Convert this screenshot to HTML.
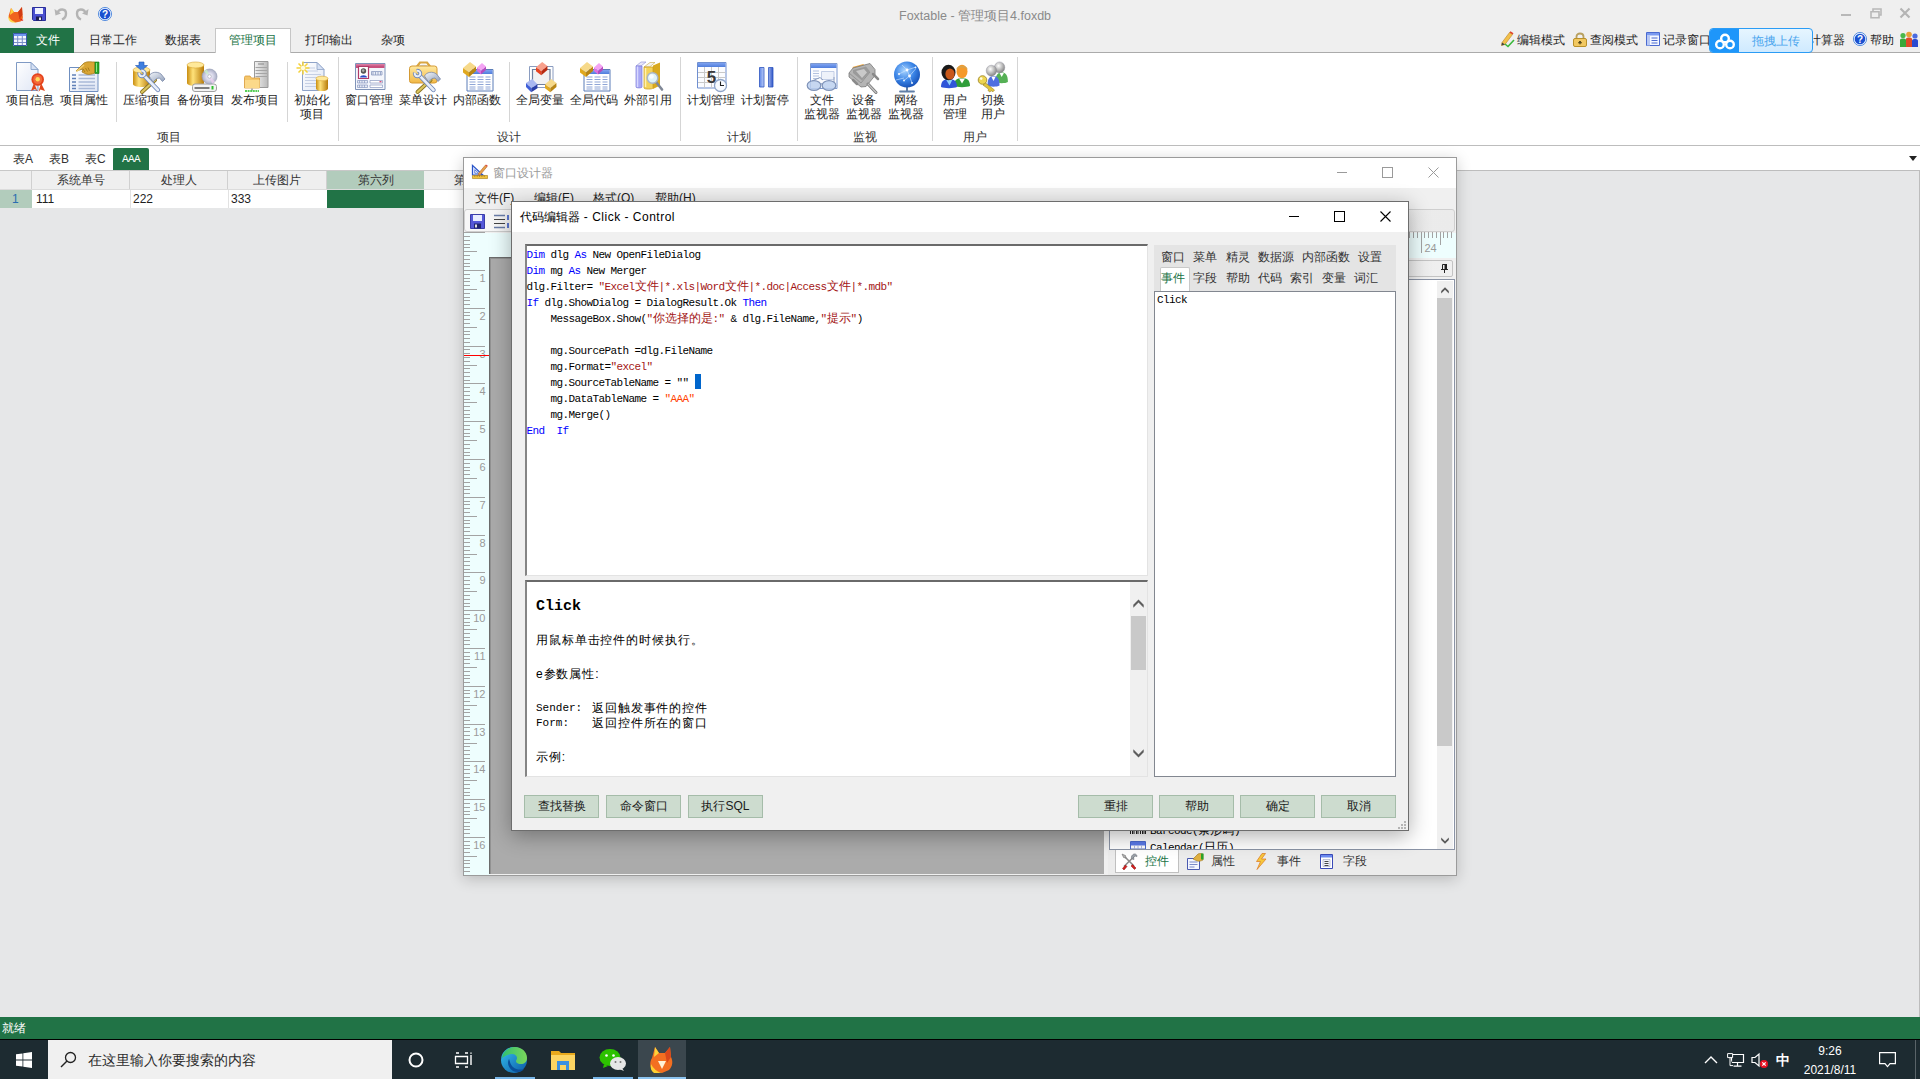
<!DOCTYPE html>
<html lang="zh">
<head>
<meta charset="utf-8">
<title>Foxtable</title>
<style>
*{box-sizing:border-box;margin:0;padding:0}
html,body{width:1920px;height:1079px;overflow:hidden;background:#e6e7e8;font-family:"Liberation Sans",sans-serif;font-size:12px;color:#1e1e1e}
.abs,.abs *{position:absolute}
.abs .code span{position:static}
.t{position:absolute;white-space:nowrap;line-height:1}
.c{text-align:center}
svg{position:absolute;overflow:visible}
/* ---------- main app ---------- */
#titlebar{left:0;top:0;width:1920px;height:53px;background:#efefef}
#tabline{left:0;top:52px;width:1920px;height:1px;background:#ababab}
#filebtn{left:0;top:28px;width:74px;height:25px;background:#217346}
#acttab{left:215px;top:28px;width:76px;height:25px;background:#fff;border:1px solid #c6c6c6;border-bottom:none}
#ribbon{left:0;top:53px;width:1920px;height:92px;background:#fff}
#ribline{left:0;top:145px;width:1920px;height:1px;background:#bdbdbd}
#tabrow{left:0;top:146px;width:1920px;height:24px;background:#fff}
.rt{font-size:12px;color:#262626;top:34px}
.rl{font-size:12px;color:#1e1e1e;text-align:center;line-height:14px}
.gl{font-size:12px;color:#333}
.sep{width:1px;background:#d5d5d5}

#cloud{left:1709px;top:28px;width:104px;height:25px;border:1px solid #2b9cf5;border-radius:4px;background:linear-gradient(#e6f5ff,#cfeaff);overflow:hidden}
#cloudl{left:0;top:0;width:29px;height:25px;background:#1e96fa}
/* grid */
#grid{left:0;top:170px;width:464px;height:38px;background:#fff}
.gh{top:1px;height:18px;background:#efefef;border-right:1px solid #d0d0d0;font-size:12px;text-align:center;line-height:18px;color:#333}

/* ---------- designer window ---------- */
#dsg{left:463px;top:157px;width:994px;height:719px;background:#f0f0f0;border:1px solid #9b9b9b;box-shadow:0 3px 14px rgba(0,0,0,.20)}
#dsg .title{left:-1px;top:0;width:992px;height:30px;background:#fff}
#dsg .menu{left:-1px;top:30px;width:992px;height:21px;background:#f0f0f0}
#dsg .tool{left:-1px;top:51px;width:992px;height:24px;background:#f1f1f1}
#dsg .hr{left:-1px;top:75px;width:992px;height:25px;background:#eefefe}
#dsg .vr{left:-1px;top:100px;width:26px;height:617px;background:#eefefe}
#dsg .cv{left:24px;top:99px;width:615px;height:617px;background:#ababab;border-left:1px solid #6c6c6c;border-top:1px solid #6c6c6c;box-shadow:inset 1px 1px 0 #929292}
#dsg .tb{left:643px;top:100px;width:348px;height:617px;background:#f0f0f0}
.mi{font-size:12px;color:#1a1a1a;top:34px}
/* ---------- code editor dialog ---------- */
#dlg{left:511px;top:201px;width:898px;height:630px;background:#f0f0f0;border:1px solid #6d6d6d;box-shadow:0 5px 20px rgba(0,0,0,.32)}
#dlg .title{left:0;top:-1px;width:896px;height:30px;background:#fff}
.sunk{background:#fff;border-top:2px solid #6a6a6a;border-left:2px solid #858585;border-right:1px solid #e3e3e3;border-bottom:1px solid #e3e3e3}
.btn{height:23px;width:75px;top:592px;background:#cddccf;border:1px solid #a5bca9;font-size:12px;text-align:center;line-height:21px;color:#1a1a1a}
.code{font-family:"Liberation Mono",monospace;font-size:11px;letter-spacing:-0.6px;line-height:16px;white-space:pre;color:#000}
.cj{font-size:12px;letter-spacing:0}
.kw{color:#0000ff}.str{color:#a31515}.str2{color:#ff4500}
.tab2{font-size:12px;color:#333}
/* status/taskbar */
#status{left:0;top:1017px;width:1920px;height:22px;background:#217346}
#taskbar{left:0;top:1039px;width:1920px;height:40px;border-top:1px solid #000;background:#1d2b31}
</style>
</head>
<body>
<div class="abs" id="app">
  <div id="titlebar"></div>
  <div id="tabline"></div>
  <div id="filebtn"></div>
  <div id="acttab"></div>
  <div class="t" style="left:899px;top:10px;font-size:12.5px;color:#8a8a8a">Foxtable - 管理项目4.foxdb</div>
  <div style="left:1841px;top:14px;width:10px;height:2px;background:#b8b8b8"></div>
  <svg style="left:1870px;top:8px" width="12" height="11" viewBox="0 0 12 11"><path d="M3 3V1h8v6H9" fill="none" stroke="#b8b8b8" stroke-width="1.6"/><path d="M1 3.8h8v6H1z" fill="none" stroke="#b8b8b8" stroke-width="1.6"/></svg>
  <svg style="left:1900px;top:8px" width="10" height="10" viewBox="0 0 10 10"><path d="M0.5 0.5l9 9M9.5 0.5l-9 9" stroke="#b4b4b4" stroke-width="2.2"/></svg>
  <!-- quick access -->
  <svg style="left:8px;top:6px" width="16" height="17" viewBox="0 0 16 17"><path d="M3 2l3 4h4l4-5 .5 8c1 3 0 5-2 6.500l-5 1-5-1.500c-2-2-2.500-5-1-8z" fill="#f0641e"/><path d="M3 2l3 4-4 3z" fill="#ffcf3a"/><path d="M0.500 10c1 3 4 5.500 8 6.500H4c-3-1-4-3.500-3.500-6.500z" fill="#ffd84a"/><path d="M10 6l4-5 .5 8-3 4z" fill="#d23c14"/><path d="M11 12l3 3 1.500-1z" fill="#e01e10"/></svg>
  <svg style="left:32px;top:7px" width="14" height="14" viewBox="0 0 14 14"><path d="M0.500 0.500h13v13h-12l-1-1z" fill="#4a4fd0" stroke="#2a2f9a"/><path d="M3 1h8v6H3z" fill="#eef1ff"/><path d="M4 9.500h6v4H4z" fill="#1e1e50"/><path d="M7 10.500h2v2.500H7z" fill="#e8e8e8"/></svg>
  <svg style="left:54px;top:7px" width="14" height="13" viewBox="0 0 14 13"><path d="M3 6.500C5 1 12 1.500 12 6.500c0 3-1.500 5-4 6" fill="none" stroke="#b4b4b4" stroke-width="2.400"/><path d="M0.500 2l1 6.500 5.500-2z" fill="#b4b4b4"/></svg>
  <svg style="left:75px;top:7px" width="14" height="13" viewBox="0 0 14 13"><path d="M11 6.500C9 1 2 1.500 2 6.500c0 3 1.500 5 4 6" fill="none" stroke="#b4b4b4" stroke-width="2.400"/><path d="M13.500 2l-1 6.500-5.500-2z" fill="#b4b4b4"/></svg>
  <svg style="left:98px;top:7px" width="14" height="14" viewBox="0 0 14 14"><circle cx="7" cy="7" r="6.600" fill="#e8f2ff" stroke="#3a7ad8" stroke-width=".8"/><circle cx="7" cy="7" r="5.300" fill="#1a50d0"/><text x="7" y="10.600" font-family="Liberation Sans,sans-serif" font-weight="bold" font-size="10" fill="#fff" text-anchor="middle">?</text></svg>
  <!-- file btn icon -->
  <svg style="left:13px;top:33px" width="14" height="13" viewBox="0 0 14 13"><path d="M0 0h14v13H0z" fill="#f4f7ff"/><path d="M0 0h14v3H0z" fill="#6f96ee"/><path d="M0 6h14M0 9.500h14M4.700 3v10M9.300 3v10" stroke="#7a8ec8" stroke-width="1"/><path d="M0.500 0.500h13v12h-13z" fill="none" stroke="#3a5aa8"/></svg>
  <!-- right icons -->
  <svg style="left:1500px;top:31px" width="15" height="16" viewBox="0 0 15 16"><path d="M2 11.500L9.500 1.500l3 2L5 13.500l-3.500 1z" fill="#f2c04a" stroke="#b8862a" stroke-width=".6"/><path d="M9.500 1.500l1-1.200 3 2-1 1.200z" fill="#e0402a"/><path d="M1.500 14.500L2 11.500l3 2z" fill="#444"/><path d="M5 13l3 2.500L14 9" fill="none" stroke="#3ab83a" stroke-width="1.600"/></svg>
  <svg style="left:1573px;top:32px" width="14" height="15" viewBox="0 0 14 15"><path d="M3.500 7V4.500c0-4 7-4 7 0V7" fill="none" stroke="#b8a060" stroke-width="1.800"/><rect x="0.500" y="6.500" width="13" height="8" rx="1.500" fill="#f2c860" stroke="#b8902a"/><path d="M7 9v3.500M5.500 11l1.500-2 1.500 2z" stroke="#5a4a1a" stroke-width="1" fill="#5a4a1a"/></svg>
  <svg style="left:1646px;top:32px" width="14" height="14" viewBox="0 0 14 14"><path d="M0.500 0.500h13v13h-13z" fill="#f4f7ff" stroke="#4a6ad0"/><path d="M1 1h12v2.500H1z" fill="#7a9af0"/><path d="M1 3.500h3v10H1z" fill="#b8c8f4"/><path d="M5.500 6h6M5.500 8.500h6M5.500 11h6" stroke="#4a6ad0" stroke-width="1"/></svg>
  <svg style="left:1853px;top:32px" width="14" height="14" viewBox="0 0 14 14"><circle cx="7" cy="7" r="6.600" fill="#e8f2ff" stroke="#3a7ad8" stroke-width=".8"/><circle cx="7" cy="7" r="5.300" fill="#1a50d0"/><text x="7" y="10.600" font-family="Liberation Sans,sans-serif" font-weight="bold" font-size="10" fill="#fff" text-anchor="middle">?</text></svg>
  <svg style="left:1900px;top:31px" width="18" height="16" viewBox="0 0 18 16"><path d="M0 16V9c0-2 6-2 6 0v7z" fill="#3aa83a"/><circle cx="3" cy="4.500" r="2.600" fill="#4ab84a"/><path d="M6 16V8c0-2 6-2 6 0v8z" fill="#e04a2a"/><circle cx="9" cy="3.500" r="2.800" fill="#e8a03a"/><path d="M12 16V9.500c0-2 6-2 6 0V16z" fill="#2a4ad0"/><circle cx="15" cy="5" r="2.600" fill="#4a6ae0"/></svg>
  <!-- tab labels -->
  <div class="t rt" style="left:36px;color:#fff">文件</div>
  <div class="t rt" style="left:89px">日常工作</div>
  <div class="t rt" style="left:165px">数据表</div>
  <div class="t rt" style="left:229px;color:#217346">管理项目</div>
  <div class="t rt" style="left:305px">打印输出</div>
  <div class="t rt" style="left:381px">杂项</div>
  <!-- right side of tab row -->
  <div class="t rt" style="left:1517px">编辑模式</div>
  <div class="t rt" style="left:1590px">查阅模式</div>
  <div class="t rt" style="left:1663px">记录窗口</div>
  <div class="t rt" style="left:1809px">计算器</div>
  <div class="t rt" style="left:1870px">帮助</div>
  <div id="cloud"><div id="cloudl"></div><svg style="left:5px;top:4px" width="20" height="17" viewBox="0 0 20 17"><circle cx="10" cy="5.500" r="3.800" fill="none" stroke="#fff" stroke-width="2.400"/><circle cx="5" cy="11.500" r="3.800" fill="none" stroke="#fff" stroke-width="2.400"/><circle cx="15" cy="11.500" r="3.800" fill="none" stroke="#fff" stroke-width="2.400"/></svg><div class="t" style="left:42px;top:6px;font-size:12px;color:#4aa5ee">拖拽上传</div></div>
  <div id="ribbon"></div>
  <div id="ribline"></div>
  <div id="tabrow"></div>
  <svg style="left:1909px;top:156px" width="8" height="5" viewBox="0 0 8 5"><path d="M0 0h8L4 5z" fill="#222"/></svg>
  <div style="left:0;top:170px;width:1920px;height:1px;background:#bdbdbd"></div>
  <div style="left:1919px;top:170px;width:1px;height:847px;background:#bdbdbd"></div>
  <div class="t rl" style="left:0px;top:93px;width:60px">项目信息</div>
  <div class="t rl" style="left:54px;top:93px;width:60px">项目属性</div>
  <div class="t rl" style="left:117px;top:93px;width:60px">压缩项目</div>
  <div class="t rl" style="left:171px;top:93px;width:60px">备份项目</div>
  <div class="t rl" style="left:225px;top:93px;width:60px">发布项目</div>
  <div class="t rl" style="left:282px;top:93px;width:60px">初始化<br>项目</div>
  <div class="t rl" style="left:339px;top:93px;width:60px">窗口管理</div>
  <div class="t rl" style="left:393px;top:93px;width:60px">菜单设计</div>
  <div class="t rl" style="left:447px;top:93px;width:60px">内部函数</div>
  <div class="t rl" style="left:510px;top:93px;width:60px">全局变量</div>
  <div class="t rl" style="left:564px;top:93px;width:60px">全局代码</div>
  <div class="t rl" style="left:618px;top:93px;width:60px">外部引用</div>
  <div class="t rl" style="left:681px;top:93px;width:60px">计划管理</div>
  <div class="t rl" style="left:735px;top:93px;width:60px">计划暂停</div>
  <div class="t rl" style="left:792px;top:93px;width:60px">文件<br>监视器</div>
  <div class="t rl" style="left:834px;top:93px;width:60px">设备<br>监视器</div>
  <div class="t rl" style="left:876px;top:93px;width:60px">网络<br>监视器</div>
  <div class="t rl" style="left:925px;top:93px;width:60px">用户<br>管理</div>
  <div class="t rl" style="left:963px;top:93px;width:60px">切换<br>用户</div>
  <div class="t gl c" style="left:149px;top:131px;width:40px">项目</div>
  <div class="t gl c" style="left:489px;top:131px;width:40px">设计</div>
  <div class="t gl c" style="left:719px;top:131px;width:40px">计划</div>
  <div class="t gl c" style="left:845px;top:131px;width:40px">监视</div>
  <div class="t gl c" style="left:955px;top:131px;width:40px">用户</div>
  <div class="sep" style="left:116px;top:62px;height:60px"></div>
  <div class="sep" style="left:287px;top:62px;height:60px"></div>
  <div class="sep" style="left:509px;top:62px;height:60px"></div>
  <div class="sep" style="left:338px;top:57px;height:84px"></div>
  <div class="sep" style="left:680px;top:57px;height:84px"></div>
  <div class="sep" style="left:797px;top:57px;height:84px"></div>
  <div class="sep" style="left:932px;top:57px;height:84px"></div>
  <div class="sep" style="left:1017px;top:57px;height:84px"></div>
  <!-- ICONS -->
  <svg width="0" height="0" style="left:0;top:0"><defs>
<linearGradient id="gGold" x1="0" y1="0" x2="1" y2="0"><stop offset="0" stop-color="#c98d10"/><stop offset=".35" stop-color="#ffe27a"/><stop offset="1" stop-color="#b77a08"/></linearGradient>
<linearGradient id="gPage" x1="0" y1="0" x2="1" y2="1"><stop offset="0" stop-color="#ffffff"/><stop offset="1" stop-color="#dfe6f5"/></linearGradient>
<linearGradient id="gBlueBar" x1="0" y1="0" x2="0" y2="1"><stop offset="0" stop-color="#7ea2f0"/><stop offset="1" stop-color="#4f7ddc"/></linearGradient>
<linearGradient id="gSteel" x1="0" y1="0" x2="1" y2="1"><stop offset="0" stop-color="#f4f7fb"/><stop offset="1" stop-color="#8e9db8"/></linearGradient>
<linearGradient id="gGray" x1="0" y1="0" x2="1" y2="0"><stop offset="0" stop-color="#f2f2f2"/><stop offset="1" stop-color="#b9b9b9"/></linearGradient>
<linearGradient id="gTool" x1="0" y1="0" x2="0" y2="1"><stop offset="0" stop-color="#ffe9a0"/><stop offset="1" stop-color="#f2b845"/></linearGradient>
<radialGradient id="gGlobe" cx=".4" cy=".35" r=".7"><stop offset="0" stop-color="#a8d4ff"/><stop offset=".55" stop-color="#3a84e6"/><stop offset="1" stop-color="#144eb4"/></radialGradient>
<radialGradient id="gCD" cx=".5" cy=".5" r=".5"><stop offset="0" stop-color="#ffffff"/><stop offset=".5" stop-color="#d8d8ea"/><stop offset="1" stop-color="#a9adc4"/></radialGradient>
<linearGradient id="gPause" x1="0" y1="0" x2="1" y2="0"><stop offset="0" stop-color="#5f86e6"/><stop offset=".45" stop-color="#dfe8ff"/><stop offset="1" stop-color="#2e55c8"/></linearGradient>
<radialGradient id="gHeadG" cx=".4" cy=".35" r=".7"><stop offset="0" stop-color="#ffffff"/><stop offset="1" stop-color="#7d7d7d"/></radialGradient>
<g id="cubeY"><path d="M0 6L7 0l6 4.5-7 6z" fill="#f6d98a"/><path d="M0 6l6 4.5V15L0 10.5z" fill="#e0a81e"/><path d="M6 10.5l7-6V9L6 15z" fill="#b98512"/></g>
<g id="cubeP"><path d="M0 4.5L5 0l4 3.5-5 4.5z" fill="#f3a4f3"/><path d="M0 4.500l4 3.5V11.500L0 8z" fill="#dd6fe0"/><path d="M4 8l5-4.500V7L4 11.500z" fill="#b44cc0"/></g>
<g id="tbl"><path d="M0.500 0.500h26v21.500h-26z" fill="#fff" stroke="#5b7db8"/><path d="M1 1h25v4H1z" fill="url(#gBlueBar)"/><path d="M3 8h6M11 8h6M19 8h5M3 10.500h6M11 10.500h6M19 10.500h5M3 13h6M11 13h6M19 13h5M3 15.500h6M11 15.500h6M19 15.500h5M3 18h6M11 18h6M19 18h5M3 20h6M11 20h6M19 20h5" stroke="#8fa5d6" stroke-width="1"/></g>
<g id="cyl"><path d="M0 3v14c0 4 17 4 17 0V3z" fill="url(#gGold)"/><ellipse cx="8.500" cy="3" rx="8.500" ry="3" fill="#ffe99a" stroke="#d8a532" stroke-width=".6"/></g>
<g id="tools"><path d="M3 20L16 8" stroke="#8a7424" stroke-width="4" stroke-linecap="round"/><path d="M3 20L16 8" stroke="#dcc65e" stroke-width="2.200" stroke-linecap="round"/><path d="M5 3.500L19 18" stroke="#6f87b8" stroke-width="4.400" stroke-linecap="round"/><path d="M5 3.500L19 18" stroke="#e8eef8" stroke-width="2.600" stroke-linecap="round"/><path d="M2.275 -1.205A2.800 2.800 0 1 1 0.295 0.775" stroke="#6f87b8" stroke-width="3.800" fill="none"/><path d="M2.275 -1.205A2.800 2.800 0 1 1 0.295 0.775" stroke="#e8eef8" stroke-width="2" fill="none"/><path d="M10 4c2-4 8-5 12-2l4 5-2.500 2.500-3-3.500-3 .5-3.500 3.500z" fill="url(#gSteel)" stroke="#7a88a8" stroke-width=".8"/></g>
</defs></svg>
  <svg style="left:14px;top:61px" width="32" height="32" viewBox="0 0 32 32"><path d="M2.500 1.500h14.500l7 7v21h-21.500z" fill="url(#gPage)" stroke="#7f9ac4"/><path d="M17 1.500v7h7z" fill="#d6e1f4" stroke="#7f9ac4" stroke-width=".8"/><path d="M20 22l-3 8 4-2 2.500 2.500zM27 22l4 8-4.500-1.500-2 2.500z" fill="#e2461c"/><circle cx="23.700" cy="18.500" r="6.300" fill="#e5421b"/><circle cx="23.700" cy="18.500" r="4.500" fill="#f2683a"/><circle cx="23.700" cy="18.300" r="2.200" fill="#ffd75a"/></svg>
  <svg style="left:68px;top:61px" width="32" height="32" viewBox="0 0 32 32"><path d="M1.500 6.500h28.500v24h-28.500z" fill="url(#gPage)" stroke="#6f8fc0"/><path d="M4 14h4M4 17.500h4M4 21h4M4 24.500h4M4 27.500h4" stroke="#6080b8" stroke-width="1.300"/><path d="M10.500 14h16.500M10.500 17.500h16.500M10.500 21h16.500M10.500 24.500h16.500M10.500 27.500h16.500" stroke="#a9b9d8" stroke-width="1.300"/><path d="M8 10l8-8c3-2 8-1 11-1v11c-3 1-6 2-9 1l-4-2 1-3z" fill="#d9a534" stroke="#9c7416" stroke-width=".7"/><path d="M8.500 10.500L16 4" stroke="#f1cf72" stroke-width="1.500"/><path d="M15 8l2 3M17.500 7l2 3.500M20 6.500l1.500 3.500" stroke="#9c7416" stroke-width=".8"/><path d="M27 1h4v11.500h-4z" fill="#2aa52a" stroke="#157a15" stroke-width=".6"/><path d="M28.500 2v9" stroke="#8fe88f" stroke-width="1"/></svg>
  <svg style="left:131px;top:61px" width="32" height="32" viewBox="0 0 32 32"><use href="#cyl" x="2" y="6" transform="translate(0,0)"/><path d="M8 1h5v3.500h3.500L10.500 9.500 4.500 4.500H8z" fill="#3f7fe0" stroke="#1f55b5" stroke-width=".6"/><use href="#tools" x="8" y="11"/></svg>
  <svg style="left:185px;top:61px" width="32" height="32" viewBox="0 0 32 32"><g transform="translate(2,1)"><path d="M0 3v18c0 4 17 4 17 0V3z" fill="url(#gGold)"/><ellipse cx="8.500" cy="3" rx="8.500" ry="3" fill="#ffe99a" stroke="#d8a532" stroke-width=".6"/></g><rect x="7.500" y="23" width="24" height="7.500" rx="2.500" fill="#f4f4f4" stroke="#a0a0a0"/><path d="M10 27h14" stroke="#555" stroke-width="1.400" stroke-linecap="round"/><rect x="26.500" y="25" width="2" height="3.500" fill="#2fbf2f"/><circle cx="24.500" cy="15.500" r="7.500" fill="url(#gCD)" stroke="#9aa0b8" stroke-width=".7"/><path d="M24.500 15.500L19 10.500A7.500 7.500 0 0 1 22 8.500z" fill="#c9f0c9" opacity=".8"/><path d="M24.500 15.500L30 20.500A7.500 7.500 0 0 1 27 22.500z" fill="#f0d0f0" opacity=".8"/><circle cx="24.500" cy="15.500" r="1.800" fill="#fff" stroke="#9a9ab0" stroke-width=".6"/></svg>
  <svg style="left:239px;top:61px" width="32" height="32" viewBox="0 0 32 32"><path d="M15.500 0.500h13.500v26h-13.500z" fill="url(#gGray)" stroke="#9a9a9a"/><path d="M19 3h6" stroke="#888" stroke-width="1"/><path d="M16.500 6.500h11.500M16.500 9.500h11.500M16.500 12.500h11.500M16.500 15.500h11.500" stroke="#a5a5a5" stroke-width="1"/><path d="M5.500 16.500c0-1 .5-1.500 1.500-1.500h4l1.500 2h8v10h-15z" fill="#f5c66a" stroke="#d89a3a" stroke-width=".8"/><path d="M6 19h14.500v8H6z" fill="#fbd98a"/><path d="M13 27.500v2" stroke="#999" stroke-width="1.500"/><path d="M6 30h14" stroke="#22c022" stroke-width="1.600" stroke-dasharray="2 .6"/></svg>
  <svg style="left:296px;top:61px" width="32" height="32" viewBox="0 0 32 32"><path d="M6.500 1.500h14.500l7 7v21h-21.500z" fill="url(#gPage)" stroke="#8fa3c8"/><path d="M21 1.500v7h7z" fill="#d6e1f4" stroke="#8fa3c8" stroke-width=".8"/><path d="M10 7h9M10 10h12M9 13.500h16M9 16.500h16M9 19.500h12M9 22.500h12M9 25.500h12" stroke="#c5cfe4" stroke-width="1"/><path d="M7 0.500v13M0.500 7h13M2.500 2.500l9 9M11.500 2.500l-9 9" stroke="#f5d23a" stroke-width="1.500"/><circle cx="7" cy="7" r="2.200" fill="#fffbe0"/><g transform="translate(20,15)"><path d="M0 2.500v10c0 3.400 12 3.400 12 0v-10z" fill="url(#gGold)"/><ellipse cx="6" cy="2.500" rx="6" ry="2.300" fill="#ffe99a" stroke="#d8a532" stroke-width=".6"/></g></svg>
  <svg style="left:353px;top:61px" width="32" height="32" viewBox="0 0 32 32"><path d="M2.500 2.500h29.500v26h-29.500z" fill="#f4f6fc" stroke="#7f93b8"/><path d="M3 3h28.500v4H3z" fill="#c8517f"/><path d="M3 3h28.500v1.500H3z" fill="#d97aa0"/><path d="M5.500 5.500h10v12h-10z" fill="#fff" stroke="#b03a68" stroke-width="1.200"/><circle cx="10.500" cy="10" r="2.700" fill="#555"/><circle cx="10.200" cy="9.600" r="1.300" fill="#aaa"/><path d="M7 16.500c0-3 7-3 7 0z" fill="#2a4cc8"/><path d="M18.500 10.500h10.500v3.500h-10.500z" fill="#e8ecf6" stroke="#8a9ac0" stroke-width=".8"/><path d="M20 11v3M22.500 11v3M25 11v3M27.500 11v3" stroke="#8a9ac0" stroke-width=".8"/><path d="M4.500 19.500h10v2.500h-10zM4.500 24h10v2.500h-10z" fill="#e8ecf6" stroke="#8a9ac0" stroke-width=".7"/><path d="M6.500 19.500v2.500M9 19.500v2.500M11.500 19.500v2.500M6.500 24v2.500M9 24v2.500M11.500 24v2.500" stroke="#8a9ac0" stroke-width=".7"/><path d="M17 19.500h12.500v2.500H17zM17 24h12.500v2.500H17z" fill="#fff" stroke="#8a9ac0" stroke-width=".7"/><path d="M26.500 20.700h2" stroke="#d04070" stroke-width="1.200"/></svg>
  <svg style="left:407px;top:61px" width="32" height="32" viewBox="0 0 32 32"><path d="M10 5.500l3-4h7l3 4" fill="none" stroke="#d9a642" stroke-width="2.200"/><path d="M12 5c1-1.700 8-1.700 9 0z" fill="#ccd3e0"/><rect x="2.500" y="5" width="27.500" height="17" rx="2.500" fill="url(#gTool)" stroke="#d49a34"/><use href="#tools" x="7.500" y="11"/></svg>
  <svg style="left:461px;top:61px" width="32" height="32" viewBox="0 0 32 32"><use href="#tbl" x="5.500" y="8"/><use href="#cubeY" x="2" y="1"/><use href="#cubeP" x="16" y="2"/></svg>
  <svg style="left:524px;top:61px" width="32" height="32" viewBox="0 0 32 32"><path d="M5.500 5.500h23.500v21h-23.500z" fill="#fff" stroke="#8a9cc0" stroke-width="1"/><path d="M8.500 8.500h17.500v15h-17.500z" fill="#f1f1f1" stroke="#6f7f9c" stroke-width="1.200"/><g transform="translate(12,1) scale(.88)"><path d="M0 6L7 0l6 4.500-7 6z" fill="#f8a08c"/><path d="M0 6l6 4.500V15L0 10.500z" fill="#e8421e"/><path d="M6 10.500l7-6V9L6 15z" fill="#b82a10"/></g><g transform="translate(2,18) scale(.88)"><path d="M0 4.500L7 0l6 6-7 4.500z" fill="#a9b8f0"/><path d="M0 4.500l6 6V15L0 9z" fill="#3f5fd8"/><path d="M6 10.500l7-4.500v4.500L6 15z" fill="#2a3fa8"/></g><g transform="translate(21,18) scale(.88)"><path d="M0 6L7 0l6 4.500-7 6z" fill="#f6d98a"/><path d="M0 6l6 4.500V15L0 10.500z" fill="#e0a81e"/><path d="M6 10.500l7-6V9L6 15z" fill="#b98512"/></g></svg>
  <svg style="left:578px;top:61px" width="32" height="32" viewBox="0 0 32 32"><use href="#tbl" x="5.500" y="8"/><use href="#cubeY" x="2" y="1"/><use href="#cubeP" x="16" y="2"/></svg>
  <svg style="left:632px;top:61px" width="32" height="32" viewBox="0 0 32 32"><path d="M4 5l5-4h5l-5 4z" fill="#e8e8f8" stroke="#8a8ad8" stroke-width=".6"/><path d="M4 5h6v21c0 1.200-6 1.200-6 0z" fill="#a8a8f4" stroke="#7a7ad8" stroke-width=".7"/><path d="M5.500 5.500v20.500" stroke="#d8d8ff" stroke-width="1.500"/><path d="M12 6l6-4.500h5L17.500 6z" fill="#f3f3f3" stroke="#c8a840" stroke-width=".6"/><path d="M21 4.500l7-3v23l-7 3.500z" fill="#d9a91e"/><path d="M12 6h9v21c0 1.400-9 1.400-9 0z" fill="#f3d25a" stroke="#c89a1a" stroke-width=".7"/><path d="M13.500 7v19" stroke="#fff2b0" stroke-width="1.500"/><path d="M24 21l6 7.500" stroke="#7f8796" stroke-width="2.600" stroke-linecap="round"/><circle cx="20.500" cy="17" r="5.300" fill="#dff3f8" stroke="#aab6c6" stroke-width="1.500"/><circle cx="19.500" cy="15.500" r="2.300" fill="#fff" opacity=".8"/></svg>
  <svg style="left:695px;top:61px" width="32" height="32" viewBox="0 0 32 32"><path d="M2.500 1.500h28.500v25.500h-28.500z" fill="#fbfcff" stroke="#6f8fd0"/><path d="M3 2h27.500v4H3z" fill="url(#gBlueBar)"/><path d="M3 11.500h27.500M3 16.500h27.500M3 21.500h27.500M9.500 6v21M16.500 6v21M23.500 6v21" stroke="#c9c9c9" stroke-width="1"/><text x="16.500" y="22" font-family="Liberation Sans,sans-serif" font-weight="bold" font-size="17" fill="#3a3a3a" text-anchor="middle">5</text><circle cx="25.500" cy="24.500" r="6" fill="#f8fbff" stroke="#8fa5c8" stroke-width="1.300"/><path d="M25.500 20.500v4h3.500" fill="none" stroke="#222" stroke-width="1.100"/></svg>
  <svg style="left:749px;top:61px" width="32" height="32" viewBox="0 0 32 32"><path d="M10.500 6.500h4.500v19.500h-4.500zM19.500 6.500h4.500v19.500h-4.500z" fill="url(#gPause)" stroke="#2f55c0" stroke-width=".8"/></svg>
  <svg style="left:806px;top:61px" width="32" height="32" viewBox="0 0 32 32"><path d="M4.500 2.500h26.500v25h-26.500z" fill="#fbfcff" stroke="#7f9ad0"/><path d="M5 3h25.500v4H5z" fill="url(#gBlueBar)"/><path d="M7 10h6M7 12.500h6M7 15h6M7 17.500h6" stroke="#b5c3e0" stroke-width="1"/><path d="M15.500 10.500h12.500v8h-12.500z" fill="#eef2fa" stroke="#b5c3e0" stroke-width=".8"/><path d="M6 20L14 16.500l3 2.500M28 22V16" fill="none" stroke="#8fa0c0" stroke-width="1"/><ellipse cx="8" cy="24.500" rx="6.800" ry="4.800" fill="#bcd0ee" fill-opacity=".85" stroke="#7f93b8" stroke-width="1.200"/><ellipse cx="23" cy="24.500" rx="6.800" ry="4.800" fill="#bcd0ee" fill-opacity=".85" stroke="#7f93b8" stroke-width="1.200"/><path d="M14.500 23.500c.7-1 1.300-1 2 0" fill="none" stroke="#7f93b8" stroke-width="1.200"/></svg>
  <svg style="left:848px;top:61px" width="32" height="32" viewBox="0 0 32 32"><path d="M4.500 6l11-3 .8 2.500-11 3.200z" fill="#f2a73a"/><path d="M1 12l4-5 17-4.500 5 6v6l-9 11-5 .5L1 16z" fill="#b5b5b5" stroke="#7a7a7a" stroke-width=".8"/><path d="M5 9l13-3.500 4 5-8 9L5 12z" fill="#9a9a9a"/><path d="M8 10l8-2 3 3.500-5 5.500z" fill="#c9c9c9"/><path d="M1 12l12 10 9-11" fill="none" stroke="#8a8a8a" stroke-width=".8"/><path d="M20 23l8 8.500" stroke="#7a7a7a" stroke-width="3" stroke-linecap="round"/><path d="M20 23l8 8.500" stroke="#c5c5c5" stroke-width="1.200" stroke-linecap="round"/><path d="M25 13l5 5" stroke="#8a8a8a" stroke-width="2.500" stroke-linecap="round"/><path d="M5 19l4 4" stroke="#8a8a8a" stroke-width="2.500" stroke-linecap="round"/></svg>
  <svg style="left:890px;top:61px" width="32" height="32" viewBox="0 0 32 32"><path d="M10 30.500h14" stroke="#5f7ea8" stroke-width="1.800" stroke-linecap="round"/><path d="M17 26v4.500" stroke="#5f7ea8" stroke-width="2"/><circle cx="17" cy="13.500" r="13" fill="url(#gGlobe)"/><path d="M9 13l8-4 9-3M17 9l2.500 6L14 19.500M19.500 15l6-7M19.500 15l2.500 7M6 19l8-2M12 4l5 5" stroke="#cfe6ff" stroke-width=".7" fill="none" opacity=".9"/><circle cx="17" cy="9" r="1.400" fill="#fff"/><circle cx="19.500" cy="15" r="1.400" fill="#fff"/><circle cx="9" cy="13" r="1" fill="#fff"/><circle cx="22" cy="22" r="1" fill="#e8f4ff"/><circle cx="14" cy="19.500" r="1" fill="#e8f4ff"/><circle cx="25.500" cy="6.500" r=".9" fill="#e8f4ff"/></svg>
  <svg style="left:939px;top:61px" width="32" height="32" viewBox="0 0 32 32"><path d="M15 25c0-6 3-8 8-8s8 2 8 8c-3 1.500-13 1.500-16 0z" fill="#2f9e3a"/><path d="M20 17.500l3 5 3-5z" fill="#fff"/><ellipse cx="23" cy="10.500" rx="5.500" ry="6.800" fill="#f59a2a"/><path d="M17.500 8.500c0-5 11-5 11 0-2-2.500-9-2.500-11 0z" fill="#d9a24a"/><path d="M2 26c0-6 3-8 8-8s8 2 8 8c-3 1.500-13 1.500-16 0z" fill="#2f55d8"/><path d="M7 18.500l3.500 6 3-6z" fill="#8fd0f8"/><ellipse cx="9.500" cy="11.500" rx="7" ry="7.800" fill="#1a1a1a"/><ellipse cx="11" cy="13" rx="4.600" ry="5.600" fill="#c8581a"/></svg>
  <svg style="left:977px;top:61px" width="32" height="32" viewBox="0 0 32 32"><path d="M18.500 21c0-7 2-9.500 6.200-9.500s6.200 2.500 6.200 9.500c-2.500 1.600-10 1.600-12.400 0z" fill="#55b055"/><path d="M22.500 12l2.200 4 2.200-4z" fill="#fff"/><ellipse cx="22.600" cy="6.400" rx="5.200" ry="5.500" fill="url(#gHeadG)" stroke="#8a8a9a" stroke-width=".4"/><path d="M10.500 24.500c0-7 2-9.500 6-9.500s6 2.500 6 9.500c-2.500 1.600-9.600 1.600-12 0z" fill="#4f6fe0"/><path d="M14.300 15.500l2.200 4.500 2.200-4.500z" fill="#fff"/><ellipse cx="14.400" cy="9.700" rx="5.200" ry="5.500" fill="url(#gHeadG)" stroke="#8a8a9a" stroke-width=".4"/><path d="M8 21.500l9.500 7.500-1.500 1.800-2-1.200-1 1.500-2-1.500.5-1.500-5.500-4z" fill="#e0c43e" stroke="#9a8222" stroke-width=".6"/><circle cx="5.500" cy="19" r="4.300" fill="#ecd452" stroke="#9a8222" stroke-width=".8"/><circle cx="4.200" cy="17.600" r="1.300" fill="#fffbe0"/></svg>
  <!-- /ICONS -->
  <!-- table tabs -->
  <div class="t" style="left:13px;top:153px;font-size:12px;color:#333">表A</div>
  <div class="t" style="left:49px;top:153px;font-size:12px;color:#333">表B</div>
  <div class="t" style="left:85px;top:153px;font-size:12px;color:#333">表C</div>
  <div style="left:113px;top:148px;width:36px;height:22px;background:#217346;border-radius:2px 2px 0 0"></div>
  <div class="t" style="left:122px;top:153px;font-family:'Liberation Mono',monospace;font-size:11px;letter-spacing:-.6px;color:#fff;line-height:12px">AAA</div>
  <div id="grid">
    <div style="left:0;top:0;width:464px;height:1px;background:#c8c8c8"></div>
    <div class="gh" style="left:0;width:32px"></div>
    <div class="gh" style="left:32px;width:98px">系统单号</div>
    <div class="gh" style="left:130px;width:98px">处理人</div>
    <div class="gh" style="left:228px;width:99px">上传图片</div>
    <div class="gh" style="left:327px;width:97px;background:#b2ccbc;border-right:none">第六列</div>
    <div class="gh" style="left:424px;width:40px;text-align:left;padding-left:30px;border-right:none">第</div>
    <div style="left:0;top:19px;width:464px;height:1px;background:#dcdcdc"></div>
    <div style="left:0;top:20px;width:32px;height:18px;background:#b2ccbc"></div>
    <div class="t" style="left:12px;top:23px;font-size:12px;color:#2b6cb0">1</div>
    <div class="t" style="left:36px;top:23px;font-size:12px">111</div>
    <div class="t" style="left:133px;top:23px;font-size:12px">222</div>
    <div class="t" style="left:231px;top:23px;font-size:12px">333</div>
    <div style="left:130px;top:20px;width:1px;height:18px;background:#e2e2e2"></div>
    <div style="left:228px;top:20px;width:1px;height:18px;background:#e2e2e2"></div>
    <div style="left:327px;top:20px;width:97px;height:18px;background:#217346"></div>
  </div>
  <div id="status"><div class="t" style="left:2px;top:5px;font-size:12px;color:#fff">就绪</div></div>
  <div id="taskbar">
    <!-- start -->
    <svg style="left:16px;top:12px" width="16" height="16" viewBox="0 0 16 16"><path fill="#fff" d="M0 2.3L6.5 1.4V7.6H0zM7.3 1.3L16 0V7.6H7.3zM0 8.4H6.5V14.6L0 13.7zM7.3 8.4H16V16L7.3 14.7z"/></svg>
    <div style="left:48px;top:0;width:344px;height:39px;background:#f0f0f0"></div>
    <svg style="left:60px;top:11px" width="17" height="17" viewBox="0 0 17 17"><circle cx="10.5" cy="6.5" r="5" fill="none" stroke="#222" stroke-width="1.3"/><path d="M7 10L1 16" stroke="#222" stroke-width="1.4"/></svg>
    <div class="t" style="left:88px;top:13px;font-size:14px;color:#2b2b2b">在这里输入你要搜索的内容</div>
    <!-- cortana -->
    <svg style="left:407px;top:11px" width="18" height="18" viewBox="0 0 18 18"><circle cx="9" cy="9" r="6.5" fill="none" stroke="#fff" stroke-width="2"/></svg>
    <!-- task view -->
    <svg style="left:455px;top:12px" width="18" height="16" viewBox="0 0 18 16"><path d="M1 1H4M1 15H4M0.5 4.5H12.5V11.5H0.5Z" fill="none" stroke="#fff" stroke-width="1.3"/><path d="M10 1H13M10 15H13" stroke="#fff" stroke-width="1.3"/><path d="M16 3V13M16 0.5V1.8" stroke="#fff" stroke-width="1.4"/></svg>
    <!-- running underlines -->
    <div style="left:495px;top:37px;width:40px;height:2px;background:#78b6e8"></div>
    <div style="left:593px;top:37px;width:40px;height:2px;background:#78b6e8"></div>
    <div style="left:638px;top:0;width:48px;height:39px;background:#3b474e"></div>
    <div style="left:638px;top:37px;width:48px;height:2px;background:#8cc4f0"></div>
    <!-- edge -->
    <svg style="left:500px;top:6px" width="28" height="28" viewBox="0 0 28 28"><defs><linearGradient id="eg1" x1="0" y1="0" x2="1" y2="1"><stop offset="0" stop-color="#35c1f1"/><stop offset="1" stop-color="#0c59a4"/></linearGradient><linearGradient id="eg2" x1="0" y1="0" x2="1" y2="0"><stop offset="0" stop-color="#2fbf71"/><stop offset="1" stop-color="#7bd65a"/></linearGradient></defs><circle cx="14" cy="14" r="13" fill="url(#eg1)"/><path d="M2 12C3 5 9 1 15 1c7 0 12 5 12 11 0 4-3 6-6 6-4 0-5-2-5-3 0-1 1-1.5 1-3 0-2-2-4-5-4-5 0-8 3-10 4z" fill="url(#eg2)"/><path d="M9 13c-2 3-1 9 4 12 4 2 9 1 11-2-3 1-8 1-11-2-3-3-3-6-4-8z" fill="#0a4f9a"/></svg>
    <!-- explorer -->
    <svg style="left:551px;top:9px" width="24" height="22" viewBox="0 0 24 22"><path d="M0 2h8l2 2h14v16H0z" fill="#e9a91c"/><path d="M0 6h24v15H0z" fill="#fcd462"/><path d="M6 12h12v9H6z" fill="#3c90e0"/><path d="M9 16h6v5H9z" fill="#fcd462"/></svg>
    <!-- wechat -->
    <svg style="left:599px;top:8px" width="28" height="24" viewBox="0 0 28 24"><ellipse cx="11" cy="9.5" rx="10.5" ry="8.5" fill="#2dc100"/><path d="M5 16l-1 4 5-2z" fill="#2dc100"/><circle cx="7.5" cy="7.5" r="1.3" fill="#fff"/><circle cx="14.5" cy="7.5" r="1.3" fill="#fff"/><ellipse cx="19" cy="15.5" rx="8" ry="6.5" fill="#e6e6e6"/><path d="M23 20l2 3-5-2z" fill="#e6e6e6"/><circle cx="16.5" cy="14" r="1" fill="#777"/><circle cx="21.5" cy="14" r="1" fill="#777"/></svg>
    <!-- foxtable -->
    <svg style="left:649px;top:6px" width="26" height="28" viewBox="0 0 26 28"><path d="M6 1l4 6h6l5-6 1 10c2 4 2 9-2 13l-7 3-8-2c-4-3-5-8-2-13z" fill="#f36f21"/><path d="M6 1l4 6-5 4z" fill="#ffd23a"/><path d="M2 18c2 4 6 8 11 9l-8 0c-3-2-4-5-3-9z" fill="#ffcf2f"/><path d="M16 7l5-6 1 10-4 6z" fill="#d9481b"/><path d="M9 15l4 8 4-8z" fill="#fff2d8"/></svg>
    <!-- tray -->
    <svg style="left:1704px;top:15px" width="14" height="9" viewBox="0 0 14 9"><path d="M1 8L7 2l6 6" fill="none" stroke="#fff" stroke-width="1.4"/></svg>
    <svg style="left:1727px;top:13px" width="18" height="15" viewBox="0 0 18 15"><path d="M4.5 1.5h12v8h-12z" fill="none" stroke="#fff" stroke-width="1.2"/><path d="M10.5 9.5v3M6.5 13.2h8" stroke="#fff" stroke-width="1.2"/><path d="M0.6 0.6h5v4h-5zM3 4.6v8h3" fill="#1d2b31" stroke="#fff" stroke-width="1"/></svg>
    <svg style="left:1751px;top:13px" width="20" height="16" viewBox="0 0 20 16"><path d="M1 4.5h3l4-3.5v12l-4-3.5H1z" fill="none" stroke="#fff" stroke-width="1.2"/><circle cx="13" cy="11" r="4" fill="#e81123"/><path d="M11.3 9.3l3.4 3.4M14.7 9.3l-3.4 3.4" stroke="#fff" stroke-width="1.2"/></svg>
    <div class="t" style="left:1776px;top:13px;font-size:14px;font-weight:bold;color:#fff">中</div>
    <div class="t c" style="left:1790px;top:5px;width:80px;font-size:12px;color:#fff">9:26</div>
    <div class="t c" style="left:1790px;top:24px;width:80px;font-size:12px;color:#fff">2021/8/11</div>
    <svg style="left:1879px;top:12px" width="17" height="16" viewBox="0 0 17 16"><path d="M0.6 0.6h15.8v11h-5.4l-2.5 3-2.5-3H0.6z" fill="none" stroke="#fff" stroke-width="1.2"/></svg>
    <div style="left:1915px;top:0;width:1px;height:39px;background:#5a6469"></div>
  </div>
</div>

<!-- ================= designer window ================= -->
<div class="abs" id="dsg">
<div id="dsgi" style="left:1px;top:0;width:0;height:0">
  <div class="title"></div>
  <svg style="left:7px;top:6px" width="16" height="15" viewBox="0 0 17 17" preserveAspectRatio="none"><path d="M0.500 1.500v11h11z" fill="#dfe8ff" stroke="#2a55c8" stroke-width="1.300"/><path d="M3 6.500v4h4z" fill="#fff" stroke="#2a55c8" stroke-width=".8"/><path d="M0.500 13h16v3.500h-16z" fill="#f2c23a" stroke="#a8801a" stroke-width=".7"/><path d="M3 13v1.500M5.500 13v1.500M8 13v1.500M10.500 13v1.500M13 13v1.500" stroke="#7a5a10" stroke-width=".7"/><path d="M7 10.500L14 1.500l2 1.500-7 9-2.500.8z" fill="#e8a04a" stroke="#a8602a" stroke-width=".6"/><path d="M14 1.500l.8-1 2 1.500-.8 1z" fill="#e04a3a"/></svg>
  <div class="t" style="left:28px;top:9px;font-size:12px;color:#9a9a9a">窗口设计器</div>
  <div style="left:872px;top:14px;width:10px;height:1px;background:#9a9a9a"></div>
  <div style="left:917px;top:9px;width:11px;height:11px;border:1px solid #9a9a9a"></div>
  <svg style="left:963px;top:9px" width="11" height="11" viewBox="0 0 11 11"><path d="M0.5 0.5l10 10M10.5 0.5l-10 10" stroke="#9a9a9a" stroke-width="1"/></svg>
  <div class="menu"></div>
  <div class="t mi" style="left:10px">文件(F)</div>
  <div class="t mi" style="left:69px">编辑(E)</div>
  <div class="t mi" style="left:128px">格式(O)</div>
  <div class="t mi" style="left:190px">帮助(H)</div>
  <div class="tool"></div>
  <div style="left:-1px;top:51px;width:991px;height:23px;border:1px solid #cfcfcf;border-radius:3px;background:linear-gradient(90deg,#f7f7f7 0%,#f0f0f0 60%,#ebebeb 100%)"></div>
  <svg style="left:5px;top:56px" width="15" height="15" viewBox="0 0 15 15"><path d="M0.5 0.5h14v14h-14z" fill="#5558d8" stroke="#3a3da8"/><path d="M3 1h9v6H3z" fill="#e8ecff"/><path d="M4 9.5h7v5H4z" fill="#20246e"/><path d="M5 10.5h2v3H5z" fill="#e0e0e0"/></svg>
  <svg style="left:28px;top:56px" width="18" height="15" viewBox="0 0 18 15"><path d="M1 1.5h11M1 13.5h11" stroke="#6a7da8" stroke-width="1.6"/><path d="M1 5.5h11M1 9.5h11" stroke="#444" stroke-width="1.2"/><path d="M15 1v5M15 9v5" stroke="#2b50c8" stroke-width="1.5"/></svg>
  <div class="hr"></div>
  <div class="vr"></div>
  <svg style="left:0;top:0" width="991" height="100"><path d="M49.5 74v21M52.5 74v6M56.5 74v6M60.5 74v6M64.5 74v6M67.5 74v13M71.5 74v6M75.5 74v6M79.5 74v6M83.5 74v6M86.5 74v21M90.5 74v6M94.5 74v6M98.5 74v6M102.5 74v6M105.5 74v13M109.5 74v6M113.5 74v6M117.5 74v6M120.5 74v6M124.5 74v21M128.5 74v6M132.5 74v6M136.5 74v6M139.5 74v6M143.5 74v13M147.5 74v6M151.5 74v6M154.5 74v6M158.5 74v6M162.5 74v21M166.5 74v6M170.5 74v6M173.5 74v6M177.5 74v6M181.5 74v13M185.5 74v6M188.5 74v6M192.5 74v6M196.5 74v6M200.5 74v21M204.5 74v6M207.5 74v6M211.5 74v6M215.5 74v6M219.5 74v13M222.5 74v6M226.5 74v6M230.5 74v6M234.5 74v6M238.5 74v21M241.5 74v6M245.5 74v6M249.5 74v6M253.5 74v6M256.5 74v13M260.5 74v6M264.5 74v6M268.5 74v6M272.5 74v6M275.5 74v21M279.5 74v6M283.5 74v6M287.5 74v6M290.5 74v6M294.5 74v13M298.5 74v6M302.5 74v6M306.5 74v6M309.5 74v6M313.5 74v21M317.5 74v6M321.5 74v6M325.5 74v6M328.5 74v6M332.5 74v13M336.5 74v6M340.5 74v6M343.5 74v6M347.5 74v6M351.5 74v21M355.5 74v6M359.5 74v6M362.5 74v6M366.5 74v6M370.5 74v13M374.5 74v6M377.5 74v6M381.5 74v6M385.5 74v6M389.5 74v21M393.5 74v6M396.5 74v6M400.5 74v6M404.5 74v6M408.5 74v13M411.5 74v6M415.5 74v6M419.5 74v6M423.5 74v6M427.5 74v21M430.5 74v6M434.5 74v6M438.5 74v6M442.5 74v6M445.5 74v13M449.5 74v6M453.5 74v6M457.5 74v6M461.5 74v6M464.5 74v21M468.5 74v6M472.5 74v6M476.5 74v6M479.5 74v6M483.5 74v13M487.5 74v6M491.5 74v6M495.5 74v6M498.5 74v6M502.5 74v21M506.5 74v6M510.5 74v6M513.5 74v6M517.5 74v6M521.5 74v13M525.5 74v6M529.5 74v6M532.5 74v6M536.5 74v6M540.5 74v21M544.5 74v6M547.5 74v6M551.5 74v6M555.5 74v6M559.5 74v13M563.5 74v6M566.5 74v6M570.5 74v6M574.5 74v6M578.5 74v21M582.5 74v6M585.5 74v6M589.5 74v6M593.5 74v6M597.5 74v13M600.5 74v6M604.5 74v6M608.5 74v6M612.5 74v6M616.5 74v21M619.5 74v6M623.5 74v6M627.5 74v6M631.5 74v6M634.5 74v13M638.5 74v6M642.5 74v6M646.5 74v6M650.5 74v6M653.5 74v21M657.5 74v6M661.5 74v6M665.5 74v6M668.5 74v6M672.5 74v13M676.5 74v6M680.5 74v6M684.5 74v6M687.5 74v6M691.5 74v21M695.5 74v6M699.5 74v6M702.5 74v6M706.5 74v6M710.5 74v13M714.5 74v6M718.5 74v6M721.5 74v6M725.5 74v6M729.5 74v21M733.5 74v6M736.5 74v6M740.5 74v6M744.5 74v6M748.5 74v13M752.5 74v6M755.5 74v6M759.5 74v6M763.5 74v6M767.5 74v21M770.5 74v6M774.5 74v6M778.5 74v6M782.5 74v6M786.5 74v13M789.5 74v6M793.5 74v6M797.5 74v6M801.5 74v6M805.5 74v21M808.5 74v6M812.5 74v6M816.5 74v6M820.5 74v6M823.5 74v13M827.5 74v6M831.5 74v6M835.5 74v6M839.5 74v6M842.5 74v21M846.5 74v6M850.5 74v6M854.5 74v6M857.5 74v6M861.5 74v13M865.5 74v6M869.5 74v6M873.5 74v6M876.5 74v6M880.5 74v21M884.5 74v6M888.5 74v6M891.5 74v6M895.5 74v6M899.5 74v13M903.5 74v6M907.5 74v6M910.5 74v6M914.5 74v6M918.5 74v21M922.5 74v6M925.5 74v6M929.5 74v6M933.5 74v6M937.5 74v13M941.5 74v6M944.5 74v6M948.5 74v6M952.5 74v6M956.5 74v21M959.5 74v6M963.5 74v6M967.5 74v6M971.5 74v6M975.5 74v13M978.5 74v6M982.5 74v6M986.5 74v6" stroke="#a3a3a3" stroke-width="1" fill="none"/><g font-family="Liberation Sans,sans-serif" font-size="11" fill="#9a9a9a"><text x="89.5" y="94">1</text><text x="127.5" y="94">2</text><text x="165.5" y="94">3</text><text x="203.5" y="94">4</text><text x="241.5" y="94">5</text><text x="278.5" y="94">6</text><text x="316.5" y="94">7</text><text x="354.5" y="94">8</text><text x="392.5" y="94">9</text><text x="430.5" y="94">10</text><text x="467.5" y="94">11</text><text x="505.5" y="94">12</text><text x="543.5" y="94">13</text><text x="581.5" y="94">14</text><text x="619.5" y="94">15</text><text x="656.5" y="94">16</text><text x="694.5" y="94">17</text><text x="732.5" y="94">18</text><text x="770.5" y="94">19</text><text x="808.5" y="94">20</text><text x="845.5" y="94">21</text><text x="883.5" y="94">22</text><text x="921.5" y="94">23</text><text x="959.5" y="94">24</text></g></svg>
  <svg style="left:-1px;top:0" width="26" height="717"><path d="M0 74.5h21M0 78.5h6M0 82.5h6M0 86.5h6M0 89.5h6M0 93.5h13M0 97.5h6M0 101.5h6M0 105.5h6M0 108.5h6M0 112.5h21M0 116.5h6M0 120.5h6M0 123.5h6M0 127.5h6M0 131.5h13M0 135.5h6M0 139.5h6M0 142.5h6M0 146.5h6M0 150.5h21M0 154.5h6M0 157.5h6M0 161.5h6M0 165.5h6M0 169.5h13M0 173.5h6M0 176.5h6M0 180.5h6M0 184.5h6M0 188.5h21M0 191.5h6M0 195.5h6M0 199.5h6M0 203.5h6M0 207.5h13M0 210.5h6M0 214.5h6M0 218.5h6M0 222.5h6M0 225.5h21M0 229.5h6M0 233.5h6M0 237.5h6M0 241.5h6M0 244.5h13M0 248.5h6M0 252.5h6M0 256.5h6M0 259.5h6M0 263.5h21M0 267.5h6M0 271.5h6M0 275.5h6M0 278.5h6M0 282.5h13M0 286.5h6M0 290.5h6M0 294.5h6M0 297.5h6M0 301.5h21M0 305.5h6M0 309.5h6M0 312.5h6M0 316.5h6M0 320.5h13M0 324.5h6M0 328.5h6M0 331.5h6M0 335.5h6M0 339.5h21M0 343.5h6M0 346.5h6M0 350.5h6M0 354.5h6M0 358.5h13M0 362.5h6M0 365.5h6M0 369.5h6M0 373.5h6M0 377.5h21M0 380.5h6M0 384.5h6M0 388.5h6M0 392.5h6M0 396.5h13M0 399.5h6M0 403.5h6M0 407.5h6M0 411.5h6M0 414.5h21M0 418.5h6M0 422.5h6M0 426.5h6M0 430.5h6M0 433.5h13M0 437.5h6M0 441.5h6M0 445.5h6M0 448.5h6M0 452.5h21M0 456.5h6M0 460.5h6M0 464.5h6M0 467.5h6M0 471.5h13M0 475.5h6M0 479.5h6M0 482.5h6M0 486.5h6M0 490.5h21M0 494.5h6M0 498.5h6M0 501.5h6M0 505.5h6M0 509.5h13M0 513.5h6M0 517.5h6M0 520.5h6M0 524.5h6M0 528.5h21M0 532.5h6M0 535.5h6M0 539.5h6M0 543.5h6M0 547.5h13M0 551.5h6M0 554.5h6M0 558.5h6M0 562.5h6M0 566.5h21M0 569.5h6M0 573.5h6M0 577.5h6M0 581.5h6M0 585.5h13M0 588.5h6M0 592.5h6M0 596.5h6M0 600.5h6M0 603.5h21M0 607.5h6M0 611.5h6M0 615.5h6M0 619.5h6M0 622.5h13M0 626.5h6M0 630.5h6M0 634.5h6M0 637.5h6M0 641.5h21M0 645.5h6M0 649.5h6M0 653.5h6M0 656.5h6M0 660.5h13M0 664.5h6M0 668.5h6M0 671.5h6M0 675.5h6M0 679.5h21M0 683.5h6M0 687.5h6M0 690.5h6M0 694.5h6M0 698.5h13M0 702.5h6M0 705.5h6M0 709.5h6M0 713.5h6" stroke="#a3a3a3" stroke-width="1" fill="none"/><g font-family="Liberation Sans,sans-serif" font-size="11" fill="#9a9a9a"><text x="21.5" y="123.5" text-anchor="end">1</text><text x="21.5" y="161.5" text-anchor="end">2</text><text x="21.5" y="199.5" text-anchor="end">3</text><text x="21.5" y="236.5" text-anchor="end">4</text><text x="21.5" y="274.5" text-anchor="end">5</text><text x="21.5" y="312.5" text-anchor="end">6</text><text x="21.5" y="350.5" text-anchor="end">7</text><text x="21.5" y="388.5" text-anchor="end">8</text><text x="21.5" y="425.5" text-anchor="end">9</text><text x="21.5" y="463.5" text-anchor="end">10</text><text x="21.5" y="501.5" text-anchor="end">11</text><text x="21.5" y="539.5" text-anchor="end">12</text><text x="21.5" y="577.5" text-anchor="end">13</text><text x="21.5" y="614.5" text-anchor="end">14</text><text x="21.5" y="652.5" text-anchor="end">15</text><text x="21.5" y="690.5" text-anchor="end">16</text></g><path d="M0 197.5h25" stroke="#ff0000" stroke-width="1"/></svg>
  <div class="cv"></div>
  <div class="tb">
    <div style="left:1px;top:2px;width:344px;height:17px;border:1px solid #c3c3c3;border-radius:2px;background:linear-gradient(90deg,#d8d8d8,#f0f0f0)"></div>
    <div style="left:1px;top:21px;width:346px;height:571px;background:#fff;border:1px solid #8a93a5"></div>
    <div style="left:2px;top:23px;width:326px;height:568px;overflow:hidden">
      <svg style="left:20px;top:545px" width="16" height="8" viewBox="0 0 16 8"><path d="M0.500 0v8M2.500 0v8M4 0v8M6.500 0v8M8 0v8M10.500 0v8M12.500 0v8M14 0v8M15.500 0v8" stroke="#222" stroke-width="1"/></svg>
      <div class="t code" style="left:40px;top:543px;font-size:11px;letter-spacing:-.6px;line-height:14px">Barcode(<span style="font-size:12px;letter-spacing:0">条形码</span>)</div>
      <svg style="left:20px;top:560px" width="16" height="14" viewBox="0 0 16 14"><path d="M0.500 0.500h15v13h-15z" fill="#fff" stroke="#4a6ad0"/><path d="M1 1h14v3.500H1z" fill="#5a7ae8"/><path d="M1 7.500h14M1 10.500h14M4.500 4.500v9M8 4.500v9M11.500 4.500v9" stroke="#9aa8d8" stroke-width=".8"/></svg>
      <div class="t code" style="left:40px;top:560px;font-size:11px;letter-spacing:-.6px;line-height:14px">Calendar(<span style="font-size:12px;letter-spacing:0">日历</span>)</div>
    </div>
    <div style="left:329px;top:23px;width:16px;height:568px;background:#f0f0f0"></div>
    <div style="left:329px;top:40px;width:15px;height:448px;background:#c9c9c9"></div>
    <svg style="left:333px;top:6px" width="7" height="9" viewBox="0 0 7 9"><path d="M1.500 0.500h4M1.500 0.500v4.500M0 5.500h7M3.500 5.500v3.500" stroke="#222" stroke-width="1" fill="none"/><path d="M3.500 0h2.500v5.500H3.500z" fill="#222"/></svg>
    <svg style="left:332.500px;top:29px" width="8" height="7" viewBox="0 0 8 7"><path d="M0.200 4L4 0.200l3.800 3.800v2.600L4 2.800 0.200 6.600z" fill="#5a5a5a"/></svg>
    <svg style="left:332.500px;top:578.500px" width="8" height="7" viewBox="0 0 8 7"><path d="M0.200 3L4 6.800l3.800-3.800V0.400L4 4.200 0.200 0.400z" fill="#5a5a5a"/></svg>
    <div style="left:0;top:592px;width:348px;height:25px;background:#ececec"></div>
    <div style="left:7px;top:592px;width:64px;height:23px;background:#fff;border:1px solid #c0c0c0;border-top:none"></div>
    <svg style="left:13px;top:595px" width="17" height="17" viewBox="0 0 17 17"><path d="M3 13.500L13 3.500" stroke="#8a8a8a" stroke-width="1.600"/><path d="M12 1.500c2-1.500 4 0 4 2l-2-.5-1.500 1.500.5 2c-2 0-3.500-2-2-4z" fill="#9aa0a8" stroke="#5a6068" stroke-width=".5"/><path d="M1.500 15.500l3-3.500 1.500 1.500-3 3.500z" fill="#d02020" stroke="#8a1010" stroke-width=".5"/><path d="M4 4l9 9" stroke="#8a8a8a" stroke-width="1.600"/><path d="M1 1l3.500 1.500L5 5 2.500 4.500z" fill="#b0b0b0" stroke="#666" stroke-width=".5"/><path d="M11.500 11.500l3.500 3.500-1.500 1.500-3.500-3.500z" fill="#d02020" stroke="#8a1010" stroke-width=".5"/></svg>
    <svg style="left:79px;top:595px" width="17" height="17" viewBox="0 0 17 17"><path d="M0.500 5.500h12v11h-12z" fill="#f4f6ff" stroke="#4a5ab0"/><path d="M2.500 9h8M2.500 11.500h8M2.500 14h5" stroke="#7a8ac8" stroke-width="1"/><path d="M6 6l5-5c2-1 4 0 5 0v6c-2 1-4 1.500-5.500 1L8 7z" fill="#e0b040" stroke="#9a7416" stroke-width=".6"/><path d="M14 0.500h2.500v6H14z" fill="#2aa52a"/></svg>
    <svg style="left:147px;top:595px" width="12" height="17" viewBox="0 0 12 17"><path d="M7 0.500L1.500 8.500h4l-3.500 8 9-10.500H6.500L10.500 0.500z" fill="#f6c83a" stroke="#e0802a" stroke-width=".8"/></svg>
    <svg style="left:212px;top:596px" width="13" height="15" viewBox="0 0 13 15"><path d="M0.500 0.500h12v14h-12z" fill="#fff" stroke="#3a4ab8"/><path d="M1 1h11v2.500H1z" fill="#6a8af0"/><path d="M3 5.500h7v7H3z" fill="#f0f2fa" stroke="#9aa0c0" stroke-width=".6"/><path d="M4.500 7.500h4M4.500 9.500h4M4.500 11.500h4" stroke="#333" stroke-width=".9"/></svg>
    <div class="t tab2" style="left:37px;top:597px;color:#217346">控件</div>
    <div class="t tab2" style="left:103px;top:597px">属性</div>
    <div class="t tab2" style="left:169px;top:597px">事件</div>
    <div class="t tab2" style="left:235px;top:597px">字段</div>
  </div>
</div>
</div>
<!-- ================= code editor dialog ================= -->
<div class="abs" id="dlg">
<div id="dlgi" style="left:0;top:1px;width:0;height:0">
  <div class="title"></div>
  <div class="t" style="left:8px;top:8px;font-size:12px;color:#000">代码编辑器<span style="position:static;letter-spacing:.5px"> - Click - Control</span></div>
  <div style="left:777px;top:13px;width:10px;height:1px;background:#000"></div>
  <div style="left:822px;top:8px;width:11px;height:11px;border:1px solid #000"></div>
  <svg style="left:868px;top:8px" width="11" height="11" viewBox="0 0 11 11"><path d="M0.5 0.5l10 10M10.5 0.5l-10 10" stroke="#000" stroke-width="1.1"/></svg>
  <svg style="left:886px;top:618px" width="8" height="8" viewBox="0 0 8 8"><path d="M6 0h2v2H6zM6 3h2v2H6zM6 6h2v2H6zM3 3h2v2H3zM3 6h2v2H3zM0 6h2v2H0z" fill="#b4b4b4"/></svg>
  <!-- code box -->
  <div class="sunk" style="left:13px;top:41px;width:623px;height:332px"></div>
  <div class="code" id="code" style="left:14.5px;top:44px"><span class="kw">Dim</span> dlg <span class="kw">As</span> New OpenFileDialog
<span class="kw">Dim</span> mg <span class="kw">As</span> New Merger
dlg.Filter= <span class="str">"Excel<span class="cj">文件</span>|*.xls|Word<span class="cj">文件</span>|*.doc|Access<span class="cj">文件</span>|*.mdb"</span>
<span class="kw">If</span> dlg.ShowDialog = DialogResult.Ok <span class="kw">Then</span>
    MessageBox.Show(<span class="str">"<span class="cj">你选择的是</span>:"</span> &amp; dlg.FileName,<span class="str">"<span class="cj">提示</span>"</span>)

    mg.SourcePath =dlg.FileName
    mg.Format=<span class="str">"excel"</span>
    mg.SourceTableName = ""
    mg.DataTableName = <span class="str2">"AAA"</span>
    mg.Merge()
<span class="kw">End</span>  <span class="kw">If</span></div>
  <div style="left:183px;top:171px;width:6px;height:15px;background:#0066cc"></div>
  <!-- description box -->
  <div class="sunk" style="left:13px;top:377px;width:623px;height:197px"></div>
  <div style="left:618px;top:379px;width:17px;height:194px;background:#f0f0f0"></div>
  <div style="left:619px;top:413px;width:15px;height:54px;background:#c9c9c9"></div>
  <svg style="left:621px;top:396px" width="11" height="9" viewBox="0 0 11 9"><path d="M0.300 5.700L5.500 0.500l5.200 5.200v3L5.500 3.600 0.300 8.700z" fill="#5e5e5e"/></svg>
  <svg style="left:621px;top:546px" width="11" height="9" viewBox="0 0 11 9"><path d="M0.300 3.300L5.500 8.500l5.200-5.200v-3L5.500 5.400 0.300 0.300z" fill="#5e5e5e"/></svg>
  <div class="t" style="left:24px;top:396px;font-family:'Liberation Mono',monospace;font-size:15px;font-weight:bold;color:#000;letter-spacing:0px">Click</div>
  <div class="t" style="left:24px;top:431px;font-size:12px;letter-spacing:.9px;color:#000">用鼠标单击控件的时候执行。</div>
  <div class="t" style="left:24px;top:465px;font-size:12px;letter-spacing:.9px;color:#000">e参数属性:</div>
  <div class="t code" style="left:24px;top:498px;font-size:11px;line-height:14px;letter-spacing:0">Sender: </div>
  <div class="t" style="left:80px;top:499px;font-size:12px;letter-spacing:.9px;color:#000">返回触发事件的控件</div>
  <div class="t code" style="left:24px;top:513px;font-size:11px;line-height:14px;letter-spacing:0">Form:</div>
  <div class="t" style="left:80px;top:514px;font-size:12px;letter-spacing:.9px;color:#000">返回控件所在的窗口</div>
  <div class="t" style="left:24px;top:548px;font-size:12px;letter-spacing:.9px;color:#000">示例:</div>
  <!-- right panel -->
  <div style="left:642px;top:42px;width:242px;height:47px;background:#e4e4e4"></div>
  <div style="left:648px;top:64px;width:30px;height:25px;background:#fff;border:1px solid #c9c9c9;border-bottom:none;border-radius:2px 2px 0 0"></div>
  <div class="t tab2" style="left:649px;top:48px">窗口</div><div class="t tab2" style="left:681px;top:48px">菜单</div><div class="t tab2" style="left:714px;top:48px">精灵</div><div class="t tab2" style="left:746px;top:48px">数据源</div><div class="t tab2" style="left:790px;top:48px">内部函数</div><div class="t tab2" style="left:846px;top:48px">设置</div><div class="t tab2" style="left:649px;top:69px;color:#217346">事件</div><div class="t tab2" style="left:681px;top:69px">字段</div><div class="t tab2" style="left:714px;top:69px">帮助</div><div class="t tab2" style="left:746px;top:69px">代码</div><div class="t tab2" style="left:778px;top:69px">索引</div><div class="t tab2" style="left:810px;top:69px">变量</div><div class="t tab2" style="left:842px;top:69px">词汇</div>
  <div style="left:642px;top:88px;width:242px;height:486px;background:#fff;border:1px solid #828790"></div>
  <div class="t code" style="left:645px;top:89px;letter-spacing:-0.6px">Click</div>
  <!-- buttons -->
  <div class="btn" style="left:12px">查找替换</div>
  <div class="btn" style="left:94px">命令窗口</div>
  <div class="btn" style="left:176px">执行SQL</div>
  <div class="btn" style="left:566px">重排</div>
  <div class="btn" style="left:647px">帮助</div>
  <div class="btn" style="left:728px">确定</div>
  <div class="btn" style="left:809px">取消</div>
</div>
</div>
</body>
</html>
